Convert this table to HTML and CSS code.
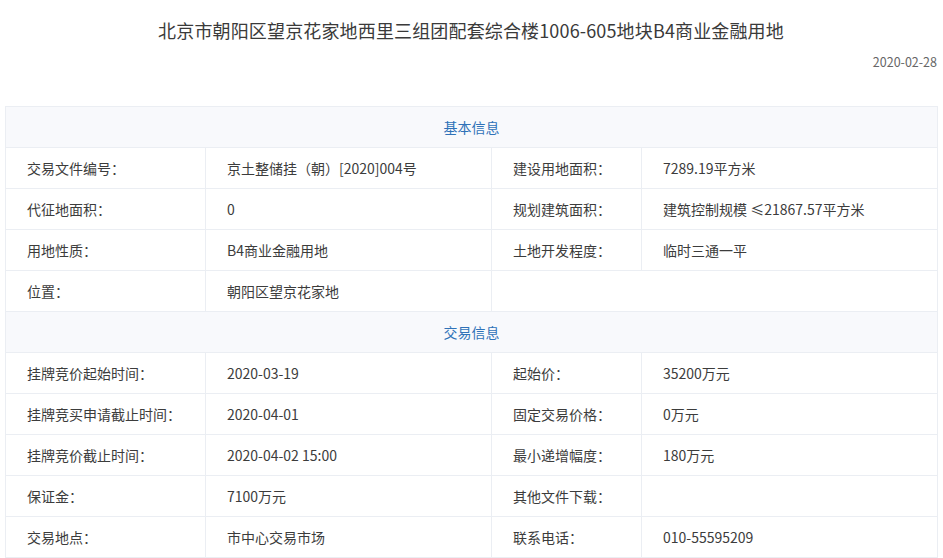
FILE: index.html
```html
<!DOCTYPE html>
<html lang="zh">
<head>
<meta charset="utf-8">
<link rel="stylesheet" href="styles.css">
</head>
<body>
<div class="page">
  <h1 class="title">北京市朝阳区望京花家地西里三组团配套综合楼1006-605地块B4商业金融用地</h1>
  <div class="date">2020-02-28</div>
  <table class="info">
    <colgroup><col class="c1"><col class="c2"><col class="c3"><col class="c4"></colgroup>
    <tr><th colspan="4">基本信息</th></tr>
    <tr><td>交易文件编号：</td><td>京土整储挂（朝）[2020]004号</td><td>建设用地面积：</td><td>7289.19平方米</td></tr>
    <tr><td>代征地面积：</td><td>0</td><td>规划建筑面积：</td><td>建筑控制规模 ≤21867.57平方米</td></tr>
    <tr><td>用地性质：</td><td>B4商业金融用地</td><td>土地开发程度：</td><td>临时三通一平</td></tr>
    <tr><td>位置：</td><td>朝阳区望京花家地</td><td colspan="2"></td></tr>
    <tr><th colspan="4">交易信息</th></tr>
    <tr><td>挂牌竞价起始时间：</td><td>2020-03-19</td><td>起始价：</td><td>35200万元</td></tr>
    <tr><td>挂牌竞买申请截止时间：</td><td>2020-04-01</td><td>固定交易价格：</td><td>0万元</td></tr>
    <tr><td>挂牌竞价截止时间：</td><td>2020-04-02 15:00</td><td>最小递增幅度：</td><td>180万元</td></tr>
    <tr><td>保证金：</td><td>7100万元</td><td>其他文件下载：</td><td></td></tr>
    <tr><td>交易地点：</td><td>市中心交易市场</td><td>联系电话：</td><td>010-55595209</td></tr>
  </table>
</div>
</body>
</html>
```

FILE: styles.css
```css
html, body {
  margin: 0;
  padding: 0;
  background: #fff;
}
body {
  font-family: "Noto Sans CJK SC", "Noto Sans", sans-serif;
  color: #333;
}
.page {
  padding: 0 6px 0 5px;
}
.title {
  margin: 0;
  padding-top: 17px;
  height: 27px;
  line-height: 27px;
  font-size: 18px;
  letter-spacing: 0.15px;
  font-weight: normal;
  text-align: center;
  color: #3a3a3a;
}
.date {
  margin-top: 8px;
  height: 20px;
  line-height: 20px;
  font-size: 12.5px;
  color: #666;
  text-align: right;
}
.info {
  margin-top: 34px;
  width: 932px;
  border-collapse: collapse;
  table-layout: fixed;
  font-size: 14px;
}
.c1 { width: 200px; }
.c2 { width: 286px; }
.c3 { width: 150px; }
.c4 { width: 296px; }
.info th,
.info td {
  border: 1px solid #ebeef3;
  height: 41px;
  padding: 0 0 0 21px;
  box-sizing: border-box;
  text-align: left;
  font-weight: normal;
  color: #3c3c3c;
  white-space: nowrap;
}
.info th {
  background: #f8f9fc;
  color: #2f72b8;
  text-align: center;
  padding: 0;
}
```
